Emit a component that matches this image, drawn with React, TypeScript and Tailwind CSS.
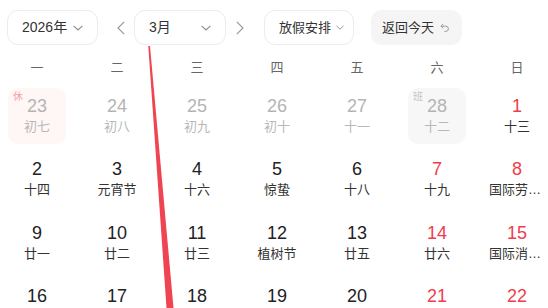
import React from 'react'

type Day = {
  n: number
  lunar: string
  prev?: boolean
  red?: boolean
  tag?: '休' | '班'
}

const WEEK = ['一', '二', '三', '四', '五', '六', '日']

const DAYS: Day[] = [
  { n: 23, lunar: '初七', prev: true, tag: '休' },
  { n: 24, lunar: '初八', prev: true },
  { n: 25, lunar: '初九', prev: true },
  { n: 26, lunar: '初十', prev: true },
  { n: 27, lunar: '十一', prev: true },
  { n: 28, lunar: '十二', prev: true, tag: '班' },
  { n: 1, lunar: '十三', red: true },
  { n: 2, lunar: '十四' },
  { n: 3, lunar: '元宵节' },
  { n: 4, lunar: '十六' },
  { n: 5, lunar: '惊蛰' },
  { n: 6, lunar: '十八' },
  { n: 7, lunar: '十九', red: true },
  { n: 8, lunar: '国际劳动妇女节', red: true },
  { n: 9, lunar: '廿一' },
  { n: 10, lunar: '廿二' },
  { n: 11, lunar: '廿三' },
  { n: 12, lunar: '植树节' },
  { n: 13, lunar: '廿五' },
  { n: 14, lunar: '廿六', red: true },
  { n: 15, lunar: '国际消费者权益日', red: true },
  { n: 16, lunar: '廿八' },
  { n: 17, lunar: '廿九' },
  { n: 18, lunar: '三十' },
  { n: 19, lunar: '二月' },
  { n: 20, lunar: '春分' },
  { n: 21, lunar: '初三', red: true },
  { n: 22, lunar: '初四', red: true },
]

function ChevronDown({ small }: { small?: boolean }) {
  return small ? (
    <svg width="8" height="5" viewBox="0 0 8 5" fill="none">
      <path d="M0.5 0.8 4 4.2 7.5 0.8" stroke="#999" strokeWidth="1" />
    </svg>
  ) : (
    <svg width="10" height="6" viewBox="0 0 10 6" fill="none">
      <path d="M0.6 0.8 5 5 9.4 0.8" stroke="#8a8a8a" strokeWidth="1.1" />
    </svg>
  )
}

function Arrow({ dir }: { dir: 'left' | 'right' }) {
  return (
    <svg width="8" height="14" viewBox="0 0 8 14" fill="none">
      <path
        d={dir === 'left' ? 'M7.2 0.8 1 7l6.2 6.2' : 'M0.8 0.8 7 7l-6.2 6.2'}
        stroke="#999"
        strokeWidth="1.2"
      />
    </svg>
  )
}

function Select({ label, width, small }: { label: string; width: string; small?: boolean }) {
  return (
    <div
      className={`flex h-[35px] items-center justify-between rounded-[11px] border border-[#ececec] bg-white pl-[14px] ${width} ${
        small ? 'pr-[9px] text-[13px]' : 'pr-[14px] text-[14px]'
      } text-[#333]`}
    >
      <span>{label}</span>
      <ChevronDown small={small} />
    </div>
  )
}

function Cell({ d }: { d: Day }) {
  const bg = d.tag === '休' ? 'bg-[#fff6f6]' : d.tag === '班' ? 'bg-[#f7f7f7]' : ''
  const numColor = d.prev ? 'text-[#b4b4b4]' : d.red ? 'text-[#ee3d4c]' : 'text-[#222]'
  const lunarColor = d.prev ? 'text-[#b8b8b8]' : 'text-[#333]'
  return (
    <div className={`relative mx-auto flex h-[56px] w-[58px] flex-col items-center rounded-[10px] pt-[8px] ${bg}`}>
      {d.tag && (
        <span
          className={`absolute left-[5px] top-[3px] text-[10px] leading-[12px] ${
            d.tag === '休' ? 'text-[#f4a4a4]' : 'text-[#c4c4c4]'
          }`}
        >
          {d.tag}
        </span>
      )}
      <span className={`text-[18px] leading-[20px] ${numColor}`}>{d.n}</span>
      <span
        className={`mt-[3px] w-[56px] overflow-hidden text-ellipsis whitespace-nowrap text-center text-[13px] leading-[16px] ${lunarColor}`}
      >
        {d.lunar}
      </span>
    </div>
  )
}

export default function App() {
  return (
    <div
      className="relative h-[308px] w-[548px] overflow-hidden bg-white"
      style={{ fontFamily: '"Liberation Sans", "Noto Sans CJK SC", sans-serif' }}
    >
      <div className="flex items-center pl-[7px] pt-[10px]">
        <Select label="2026年" width="w-[91px]" />
        <div className="ml-[19px] flex">
          <Arrow dir="left" />
        </div>
        <div className="ml-[9px]">
          <Select label="3月" width="w-[92px]" />
        </div>
        <div className="ml-[10px] flex">
          <Arrow dir="right" />
        </div>
        <div className="ml-[20px]">
          <Select label="放假安排" width="w-[90px]" small />
        </div>
        <button
          type="button"
          className="ml-[17px] flex h-[35px] w-[91px] items-center gap-[6px] rounded-[11px] bg-[#f5f5f5] pl-[11px] text-[13px] text-[#333]"
        >
          返回今天
          <svg width="10" height="10" viewBox="0 0 10 10" fill="none">
            <path d="M3.2 1 1 3.2l2.2 2.2" stroke="#999" strokeWidth="1" />
            <path d="M1 3.2h4.8a2.6 2.6 0 0 1 0 5.2H4.4" stroke="#999" strokeWidth="1" />
          </svg>
        </button>
      </div>

      <div className="ml-[-3px] mt-[13px] grid w-[560px] grid-cols-[repeat(7,80px)]">
        {WEEK.map((w) => (
          <div key={w} className="text-center text-[13px] leading-[20px] text-[#666]">
            {w}
          </div>
        ))}
      </div>

      <div className="ml-[-3px] mt-[10px] grid w-[560px] grid-cols-[repeat(7,80px)] gap-y-[7.33px]">
        {DAYS.map((d, i) => (
          <Cell key={i} d={d} />
        ))}
      </div>

      <svg className="pointer-events-none absolute left-0 top-0" width="548" height="308" viewBox="0 0 548 308">
        <polygon points="148.3,46 150,46 173.5,308 166.5,308" fill="#ef4452" />
      </svg>
    </div>
  )
}
